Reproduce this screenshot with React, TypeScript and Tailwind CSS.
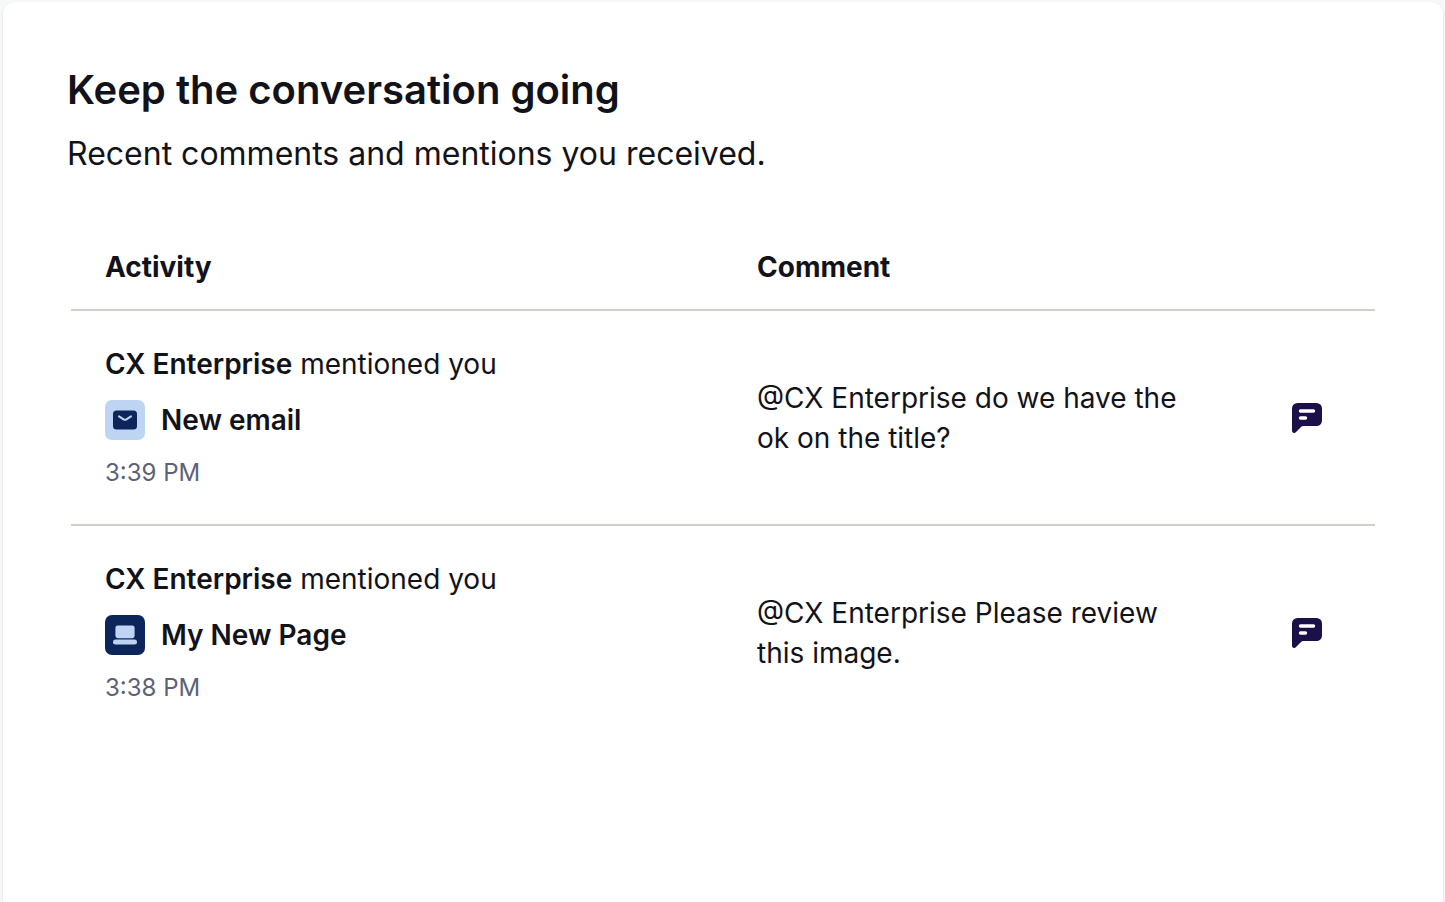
import React from "react";

type Activity = {
  id: number;
  user: string;
  kind: "email" | "page";
  title: string;
  time: string;
  comment: string;
};

const activities: Activity[] = [
  {
    id: 1,
    user: "CX Enterprise",
    kind: "email",
    title: "New email",
    time: "3:39 PM",
    comment: "@CX Enterprise do we have the ok on the title?",
  },
  {
    id: 2,
    user: "CX Enterprise",
    kind: "page",
    title: "My New Page",
    time: "3:38 PM",
    comment: "@CX Enterprise Please review this image.",
  },
];

const EmailIcon = () => (
  <svg viewBox="0 0 40 40" className="size-10 shrink-0" aria-hidden="true">
    <rect width="40" height="40" rx="7" fill="#bfd3f2" />
    <rect x="8" y="10.5" width="24" height="19" rx="3.5" fill="#0c265c" />
    <path
      d="M14 16.3 L18.6 19.4 Q20 20.3 21.4 19.4 L26 16.3"
      fill="none"
      stroke="#bfd3f2"
      strokeWidth="2"
      strokeLinecap="round"
    />
  </svg>
);

const PageIcon = () => (
  <svg viewBox="0 0 40 40" className="size-10 shrink-0" aria-hidden="true">
    <rect width="40" height="40" rx="7" fill="#0c265c" />
    <rect x="10.4" y="10.4" width="19.2" height="12.8" rx="2.4" fill="#bfd3f2" />
    <rect x="8" y="24.6" width="24" height="5" rx="2.4" fill="#bfd3f2" />
  </svg>
);

const CommentIcon = () => (
  <svg viewBox="0 0 30 30" className="size-[30px]" aria-hidden="true">
    <path
      d="M5.5 0 H24.5 A5.5 5.5 0 0 1 30 5.5 V17.5 A5.5 5.5 0 0 1 24.5 23 H11.5 Q10 23 9 24 L3.8 29.2 Q2.6 30.3 1.2 29.7 Q0 29.2 0 27.5 V5.5 A5.5 5.5 0 0 1 5.5 0 Z"
      fill="#1b1048"
    />
    <path
      d="M8.5 8 H21.5 M8.5 15 H13.5"
      fill="none"
      stroke="#fff"
      strokeWidth="3.4"
      strokeLinecap="round"
    />
  </svg>
);

const ActivityRow = ({ user, kind, title, time, comment }: Activity) => {
  return (
    <tr className="border-t-2 border-[#d0d0cb]">
      <td className="px-[34px] pt-[33px] pb-[31px]">
        <p>
          <span className="font-semibold">{user}</span> mentioned you
        </p>
        <div className="mt-4 flex items-center gap-4">
          {kind === "email" ? <EmailIcon /> : <PageIcon />}
          <span className="font-semibold">{title}</span>
        </div>
        <p className="mt-[13px] text-2xl leading-10 text-[#5c6278]">{time}</p>
      </td>
      <td className="px-[34px]">
        <p className="max-w-[432px]">{comment}</p>
      </td>
      <td className="pl-[34px]">
        <button type="button" aria-label="Open comment" className="block">
          <CommentIcon />
        </button>
      </td>
    </tr>
  );
};

export default function App() {
  return (
    <div className="min-h-screen bg-[#f7f8f9] flex flex-col pt-0.5 pr-0.5 pl-[3px] font-['Inter',sans-serif] text-[#12131a]">
      <section className="flex-1 rounded-t-xl bg-white px-16 pt-16 shadow-sm">
        <h1 className="text-[40px] leading-12 font-semibold">
          Keep the conversation going
        </h1>
        <p className="mt-4 text-[32px] leading-12">
          Recent comments and mentions you received.
        </p>
        <div className="mt-12 px-1">
          <table className="w-full table-fixed border-collapse text-left text-[28px] leading-10">
            <thead>
              <tr>
                <th className="w-1/2 px-[34px] pt-[21px] pb-[22px] font-bold">Activity</th>
                <th className="px-[34px] pt-[21px] pb-[22px] font-bold">Comment</th>
                <td className="w-[117px]"></td>
              </tr>
            </thead>
            <tbody>
              {activities.map((activity) => (
                <ActivityRow key={activity.id} {...activity} />
              ))}
            </tbody>
          </table>
        </div>
      </section>
    </div>
  );
}
